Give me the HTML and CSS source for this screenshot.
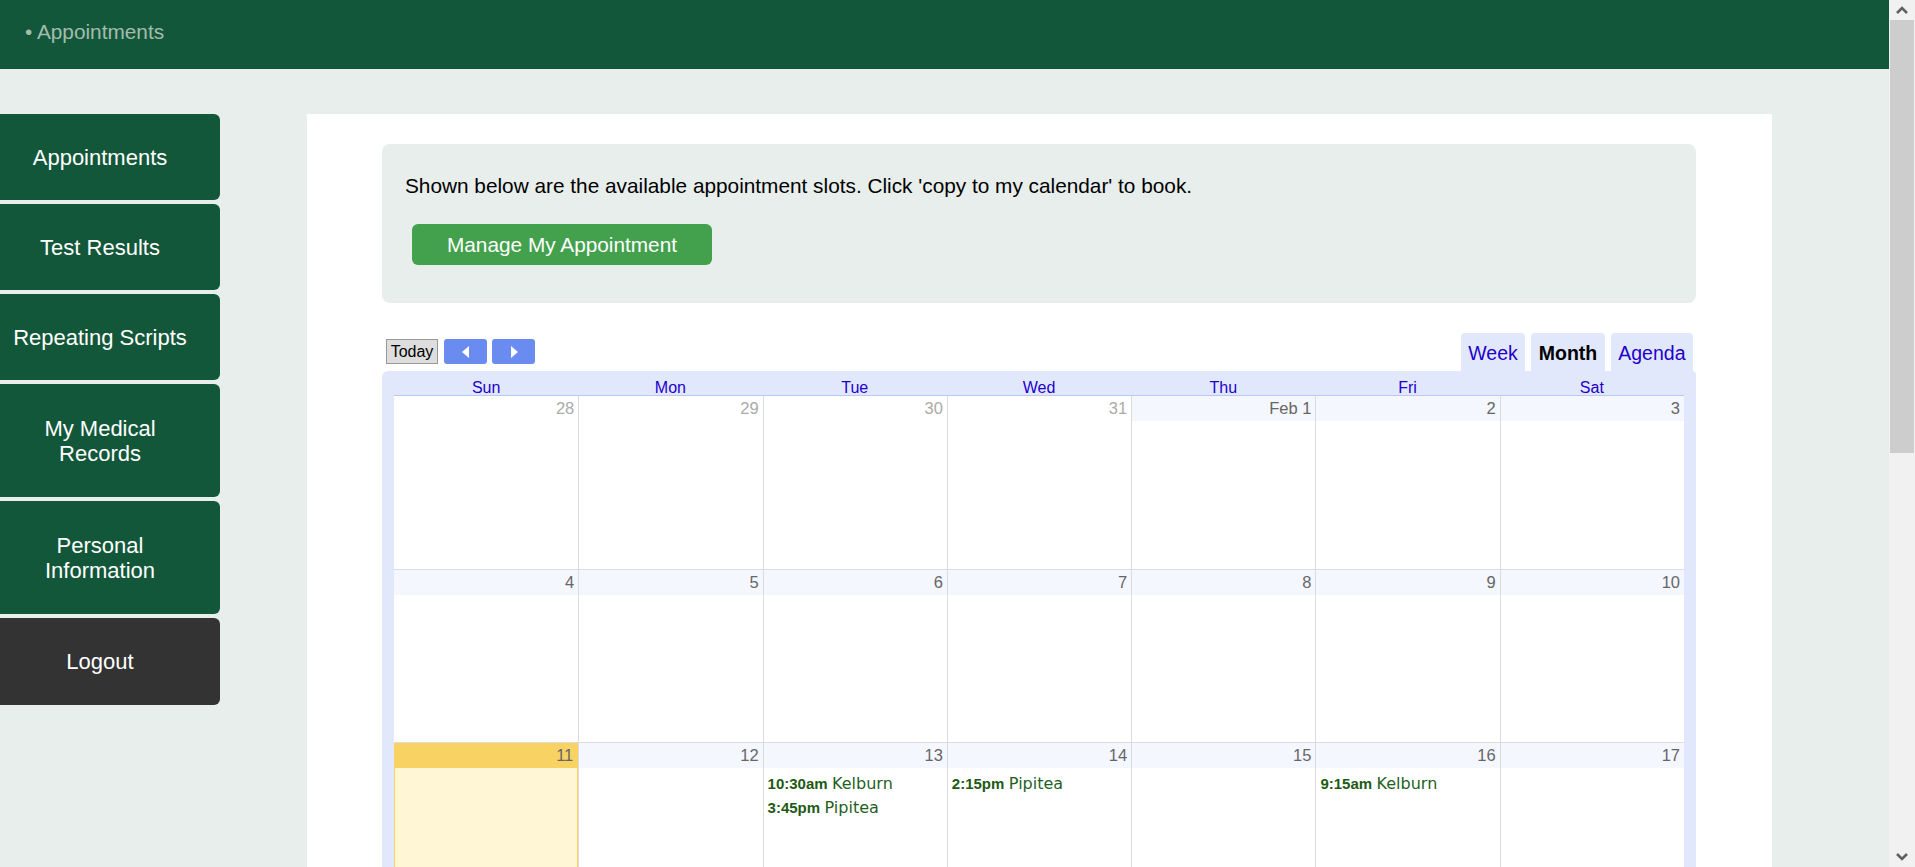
FILE: index.html
```html
<!DOCTYPE html>
<html lang="en">
<head>
<meta charset="utf-8">
<title>Appointments</title>
<link rel="stylesheet" href="styles.css">
</head>
<body>
<header class="topbar"><span class="crumb">• Appointments</span></header>
<div class="page">
  <nav class="sidenav">
    <a class="navbtn" href="#">Appointments</a>
    <a class="navbtn" href="#">Test Results</a>
    <a class="navbtn" href="#">Repeating Scripts</a>
    <a class="navbtn tall" href="#">My Medical<br>Records</a>
    <a class="navbtn tall" href="#">Personal<br>Information</a>
    <a class="navbtn logout" href="#">Logout</a>
  </nav>
  <main class="panel">
    <section class="intro">
      <p class="intro-text">Shown below are the available appointment slots. Click 'copy to my calendar' to book.</p>
      <a class="manage" href="#">Manage My Appointment</a>
    </section>
    <div class="cal">
      <div class="toolbar">
        <div class="nav-left">
          <button class="btn-today">Today</button>
          <button class="arrow"><svg width="8" height="12" viewBox="0 0 8 12"><polygon points="7,0 7,12 0,6" fill="#fff"/></svg></button>
          <button class="arrow"><svg width="8" height="12" viewBox="0 0 8 12"><polygon points="1,0 1,12 8,6" fill="#fff"/></svg></button>
        </div>
        <div class="tabs">
          <span class="tab">Week</span>
          <span class="tab active">Month</span>
          <span class="tab">Agenda</span>
        </div>
      </div>
      <div class="grid">
        <div class="dow"><span>Sun</span><span>Mon</span><span>Tue</span><span>Wed</span><span>Thu</span><span>Fri</span><span>Sat</span></div>
        <div class="week first">
          <div class="day other"><div class="num">28</div></div>
          <div class="day other"><div class="num">29</div></div>
          <div class="day other"><div class="num">30</div></div>
          <div class="day other"><div class="num">31</div></div>
          <div class="day"><div class="num">Feb 1</div></div>
          <div class="day"><div class="num">2</div></div>
          <div class="day"><div class="num">3</div></div>
        </div>
        <div class="week">
          <div class="day"><div class="num">4</div></div>
          <div class="day"><div class="num">5</div></div>
          <div class="day"><div class="num">6</div></div>
          <div class="day"><div class="num">7</div></div>
          <div class="day"><div class="num">8</div></div>
          <div class="day"><div class="num">9</div></div>
          <div class="day"><div class="num">10</div></div>
        </div>
        <div class="week">
          <div class="day is-today"><div class="num">11</div></div>
          <div class="day"><div class="num">12</div></div>
          <div class="day"><div class="num">13</div>
            <div class="events">
              <div class="ev"><b>10:30am</b> <span>Kelburn</span></div>
              <div class="ev"><b>3:45pm</b> <span>Pipitea</span></div>
            </div>
          </div>
          <div class="day"><div class="num">14</div>
            <div class="events">
              <div class="ev"><b>2:15pm</b> <span>Pipitea</span></div>
            </div>
          </div>
          <div class="day"><div class="num">15</div></div>
          <div class="day"><div class="num">16</div>
            <div class="events">
              <div class="ev"><b>9:15am</b> <span>Kelburn</span></div>
            </div>
          </div>
          <div class="day"><div class="num">17</div></div>
        </div>
        <div class="week">
          <div class="day"><div class="num">18</div></div>
          <div class="day"><div class="num">19</div></div>
          <div class="day"><div class="num">20</div></div>
          <div class="day"><div class="num">21</div></div>
          <div class="day"><div class="num">22</div></div>
          <div class="day"><div class="num">23</div></div>
          <div class="day"><div class="num">24</div></div>
        </div>
        <div class="week">
          <div class="day"><div class="num">25</div></div>
          <div class="day"><div class="num">26</div></div>
          <div class="day"><div class="num">27</div></div>
          <div class="day"><div class="num">28</div></div>
          <div class="day"><div class="num">29</div></div>
          <div class="day other"><div class="num">Mar 1</div></div>
          <div class="day other"><div class="num">2</div></div>
        </div>
      </div>
    </div>
  </main>
</div>
<div class="scrollbar" aria-hidden="true">
  <div class="sb-btn"><svg width="12" height="8" viewBox="0 0 12 8"><polyline points="1,7 6,2 11,7" fill="none" stroke="#606060" stroke-width="2.6"/></svg></div>
  <div class="sb-track"><div class="sb-thumb"></div></div>
  <div class="sb-btn"><svg width="12" height="8" viewBox="0 0 12 8"><polyline points="1,1 6,6 11,1" fill="none" stroke="#606060" stroke-width="2.6"/></svg></div>
</div>
</body>
</html>
```
FILE: styles.css
```css
* { box-sizing: border-box; }
html, body { margin: 0; }
body {
  background: #e7eeeb;
  font-family: "Liberation Sans", Arial, sans-serif;
  color: #000;
}
.topbar {
  height: 69px;
  background: #13573a;
  padding: 20px 0 0 25px;
}
.crumb {
  font-size: 20.8px;
  line-height: 24px;
  color: #a3bcad;
}
.page {
  display: flex;
  align-items: flex-start;
  padding: 45px 0 345px 0;
}
.sidenav {
  width: 220px;
  flex: none;
  display: flex;
  flex-direction: column;
  gap: 4px;
}
.navbtn {
  display: flex;
  align-items: center;
  justify-content: center;
  text-align: center;
  height: 86px;
  padding-right: 20px;
  background: #13573a;
  color: #fff;
  font-size: 22px;
  line-height: 25px;
  border-radius: 0 6px 6px 0;
  text-decoration: none;
}
.navbtn.tall { height: 113px; }
.navbtn.logout { background: #333333; height: 87px; }
.panel {
  flex: none;
  margin-left: 87px;
  width: 1465px;
  background: #fff;
  padding: 30px 76px 30px 75px;
}
.intro {
  background: #e7eeeb;
  border-radius: 8px;
  padding: 30px 0 38px 23px;
  display: flex;
  flex-direction: column;
  align-items: flex-start;
  gap: 26px;
}
.intro-text {
  margin: 0;
  font-size: 20.8px;
  line-height: 24px;
}
.manage {
  display: block;
  width: 300px;
  height: 41px;
  margin-left: 7px;
  background: #43a14d;
  color: #fff;
  border-radius: 6px;
  font-size: 20.8px;
  line-height: 41px;
  text-align: center;
  text-decoration: none;
}
.cal { margin-top: 30px; }
.toolbar {
  display: flex;
  justify-content: space-between;
  align-items: flex-start;
  height: 38px;
}
.nav-left {
  display: flex;
  margin: 6px 0 0 4px;
}
.btn-today {
  height: 25px;
  width: 52px;
  padding: 0;
  background: #dddddd;
  border: 1px solid #999;
  font: 16px "Liberation Sans", Arial, sans-serif;
  color: #000;
}
.arrow {
  width: 43px;
  height: 25px;
  margin-left: 6px;
  padding: 0;
  background: #6a8cf0;
  border: 0;
  border-radius: 3px;
  display: flex;
  align-items: center;
  justify-content: center;
}
.arrow + .arrow { margin-left: 5px; }
.tabs {
  display: flex;
  gap: 6px;
  margin-right: 3px;
}
.tab {
  height: 38px;
  padding: 2px 7.5px 0;
  line-height: 36px;
  font-size: 19.5px;
  color: #2200cc;
  background: #e1e8fc;
  border-radius: 4px 4px 0 0;
}
.tab.active { font-weight: bold; color: #000; }
.grid {
  background: #e1e8fc;
  padding: 0 12px 12px;
  border-radius: 6px 4px 0 0;
}
.dow {
  display: grid;
  grid-template-columns: repeat(7, 1fr);
  height: 24px;
  padding-top: 9px;
}
.dow span {
  text-align: center;
  font-size: 16px;
  line-height: 15px;
  color: #2200cc;
}
.week {
  display: grid;
  grid-template-columns: repeat(7, 1fr);
  height: 173.5px;
  border-top: 1px solid #dcdcdc;
  background: #fff;
}
.week.first { border-top-color: #bcc8f5; }
.day { border-left: 1px solid #dcdcdc; }
.day:first-child { border-left: 0; }
.num {
  height: 25px;
  background: #f5f7fe;
  text-align: right;
  padding-right: 4px;
  font-size: 16.5px;
  line-height: 25px;
  color: #666;
}
.day.other .num { background: #fff; color: #aaa; }
.day.is-today {
  background: #fff6d6;
  border-left: 1px solid #f9d264;
  border-right: 1px solid #f9d264;
}
.day.is-today .num { background: #f9d264; }
.events { padding: 4px 0 0 4px; }
.ev {
  line-height: 24px;
  white-space: nowrap;
  color: #1f5f1f;
}
.ev b {
  font: bold 15px "Liberation Sans", Arial, sans-serif;
  color: #1d5a14;
}
.ev span {
  font-family: "DejaVu Sans", Verdana, sans-serif;
  font-size: 16px;
}
.scrollbar {
  position: fixed;
  top: 0;
  right: 0;
  width: 26px;
  height: 100vh;
  background: #f1f1f1;
  display: flex;
  flex-direction: column;
}
.sb-btn {
  height: 20px;
  flex: none;
  display: flex;
  align-items: center;
  justify-content: center;
}
.sb-track {
  flex: 1;
  padding: 0 1px;
}
.sb-thumb {
  height: 433px;
  background: #cdcdcd;
}
```
